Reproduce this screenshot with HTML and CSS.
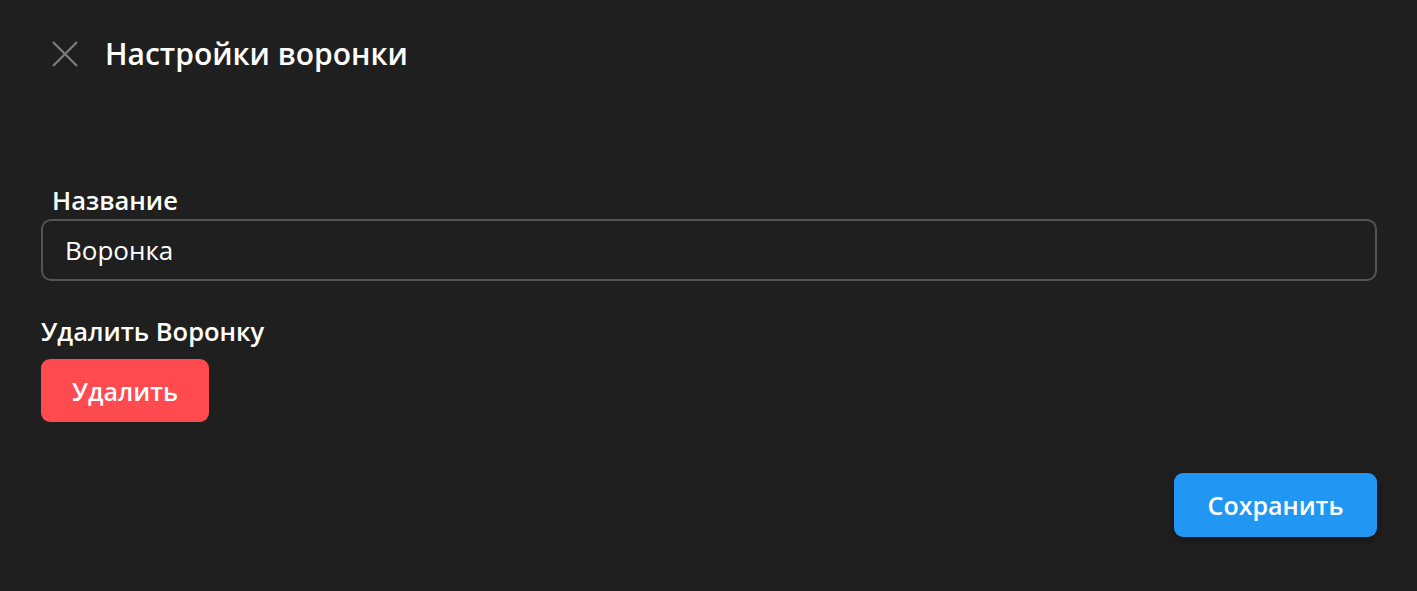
FILE: index.html
```html
<!DOCTYPE html>
<html lang="ru">
<head>
<meta charset="utf-8">
<link rel="stylesheet" href="styles.css">
</head>
<body>
<div class="dialog">
  <header class="header">
    <button class="close" aria-label="Закрыть">
      <svg width="26" height="26" viewBox="0 0 26 26"><path d="M1 1 L25 25 M25 1 L1 25" stroke="#7a7a7a" stroke-width="2.4" fill="none"/></svg>
    </button>
    <h1 class="title">Настройки воронки</h1>
  </header>
  <main class="content">
    <label class="field-label" for="name">Название</label>
    <div class="input">Воронка</div>
    <div class="section-label">Удалить Воронку</div>
    <div class="row"><button class="btn btn-danger">Удалить</button></div>
    <div class="footer"><button class="btn btn-primary">Сохранить</button></div>
  </main>
</div>
</body>
</html>
```
FILE: styles.css
```css
* { box-sizing: border-box; }
html, body { margin: 0; height: 100%; }
body {
  background: #1f1f1f;
  color: #fff;
  font-family: "Open Sans", "Noto Sans", sans-serif;
}
.dialog { display: flex; flex-direction: column; }
.header {
  display: flex;
  align-items: center;
  height: 108px;
  padding-left: 52px;
}
.close {
  background: none; border: 0; padding: 0; margin: 0;
  width: 26px; height: 26px; display: flex;
}
.title {
  margin: 0 0 0 27px;
  font-size: 30px;
  line-height: 40px;
  font-weight: 600;
  color: #fff;
}
.content {
  display: flex;
  flex-direction: column;
  padding: 75px 40px 0 41px;
}
.field-label {
  font-size: 25.5px;
  font-weight: 600;
  margin-left: 11px;
  line-height: 34px;
  margin-bottom: 2px;
}
.input {
  height: 62px;
  border: 2px solid #545454;
  border-radius: 10px;
  padding: 0 22px;
  display: flex;
  align-items: center;
  font-size: 26px;
}
.section-label {
  margin-top: 33px;
  font-size: 25.5px;
  font-weight: 600;
  line-height: 34px;
}
.row { display: flex; margin-top: 11px; }
.btn {
  border: 0;
  border-radius: 9px;
  color: #fff;
  font-family: inherit;
  font-weight: 600;
  font-size: 25px;
  height: 63px;
  padding: 0;
}
.btn-danger {
  background: #ff4a4f;
  width: 168px;
}
.btn-primary {
  background: #2196f3;
  width: 203px;
  height: 64px;
  box-shadow: 0 3px 8px rgba(0,0,0,0.35);
}
.footer {
  display: flex;
  justify-content: flex-end;
  margin-top: 51px;
}
```
